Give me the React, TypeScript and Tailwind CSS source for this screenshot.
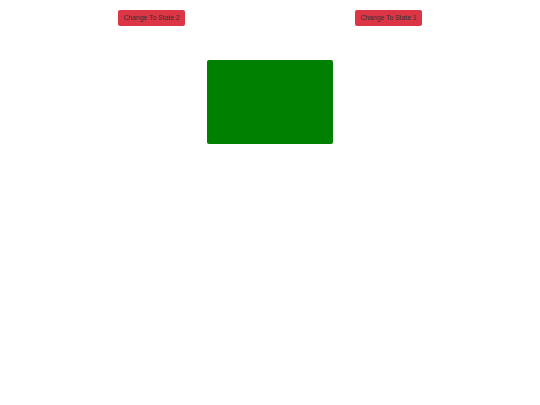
export default function App() {
  return (
    <div className="w-[540px] h-[405px] bg-white" style={{ fontFamily: '"Liberation Sans", Arial, sans-serif' }}>
      <div className="flex justify-between px-[118px] pt-[10px]">
        <button className="w-[67px] h-[16px] bg-[#dc3545] rounded-[2px] text-[6.8px] text-[#333] leading-none flex items-center justify-center">
          Change To State 2
        </button>
        <button className="w-[67px] h-[16px] bg-[#dc3545] rounded-[2px] text-[6.8px] text-[#333] leading-none flex items-center justify-center">
          Change To State 1
        </button>
      </div>
      <div className="flex justify-center pt-[34px]">
        <div className="w-[126px] h-[84px] bg-[#008000] rounded-[2px]" />
      </div>
    </div>
  );
}
